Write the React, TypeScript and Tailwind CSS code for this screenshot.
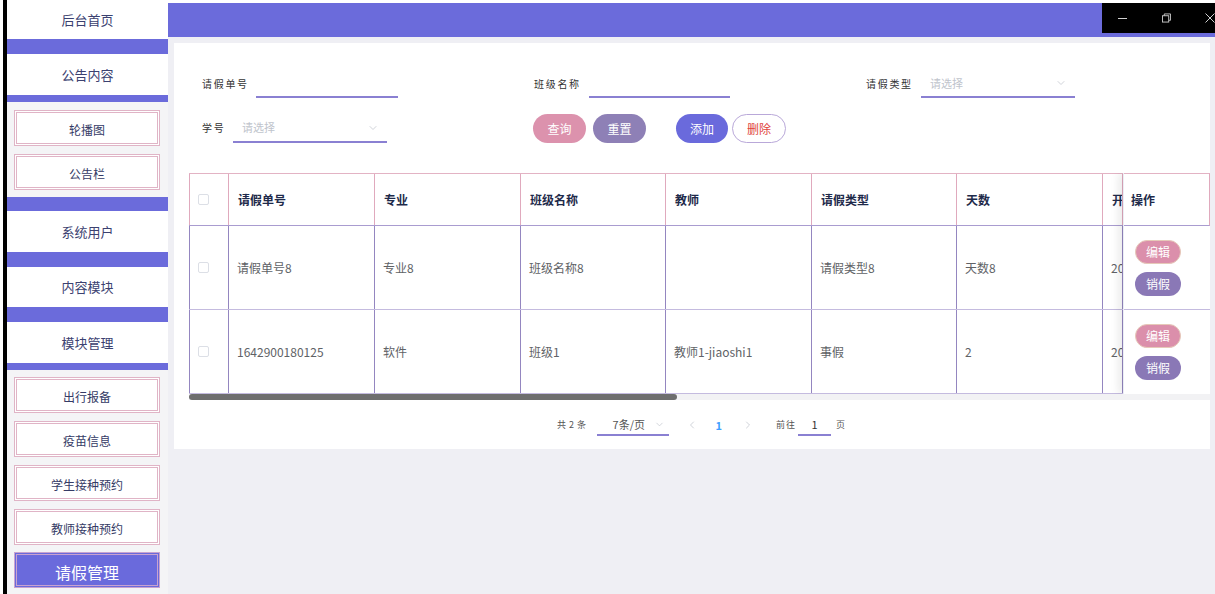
import { ChevronDown, ChevronLeft, ChevronRight } from 'lucide-react'

const FONT = "font-['Noto_Sans_CJK_SC','Noto_Sans',sans-serif]"

const COLS = [146, 146, 145, 146, 145, 146, 20]
const HEADERS = ['请假单号', '专业', '班级名称', '教师', '请假类型', '天数', '开始时间']
const ROWS = [
  ['请假单号8', '专业8', '班级名称8', '', '请假类型8', '天数8', '2022-01-23'],
  ['1642900180125', '软件', '班级1', '教师1-jiaoshi1', '事假', '2', '2022-01-23'],
]

function SubItem({ label, active }: { label: string; active?: boolean }) {
  return (
    <div
      className={`ml-[7px] w-[146px] h-[36px] border-[3px] border-double flex items-center justify-center pt-[3px] ${
        active
          ? 'bg-[#6a6adc] border-[#c9a3cf] text-white text-[16px]'
          : 'bg-white border-[#e0b4c6] text-[#353b66] text-[12px]'
      }`}
    >
      {label}
    </div>
  )
}

function Sidebar() {
  const head = 'bg-white flex items-center justify-center text-[13px] text-[#3b4170]'
  const bar = 'bg-[#6b6bdb]'
  return (
    <div className="w-[161px] shrink-0 bg-[#f4f4f6] flex flex-col">
      <div className={`${head} h-[39px]`}>后台首页</div>
      <div className={`${bar} h-[15px]`} />
      <div className={`${head} h-[41px]`}>公告内容</div>
      <div className={`${bar} h-[7px]`} />
      <div className="mt-[8px]"><SubItem label="轮播图" /></div>
      <div className="mt-[8px]"><SubItem label="公告栏" /></div>
      <div className={`${bar} h-[14px] mt-[7px]`} />
      <div className={`${head} h-[41px]`}>系统用户</div>
      <div className={`${bar} h-[15px]`} />
      <div className={`${head} h-[40px]`}>内容模块</div>
      <div className={`${bar} h-[15px]`} />
      <div className={`${head} h-[41px]`}>模块管理</div>
      <div className={`${bar} h-[7px]`} />
      <div className="mt-[7px]"><SubItem label="出行报备" /></div>
      <div className="mt-[8px]"><SubItem label="疫苗信息" /></div>
      <div className="mt-[8px]"><SubItem label="学生接种预约" /></div>
      <div className="mt-[8px]"><SubItem label="教师接种预约" /></div>
      <div className="mt-[7px]"><SubItem label="请假管理" active /></div>
    </div>
  )
}

function Label({ text, w }: { text: string; w: string }) {
  return <div className={`${w} shrink-0 pb-[2px] text-[10px] tracking-[1.7px] text-[#333]`}>{text}</div>
}

function Select({ w }: { w: string }) {
  return (
    <div className={`${w} h-full border-b-2 border-[#8a80d2] flex items-center justify-between pl-[9px] pr-[8px]`}>
      <span className="text-[11px] text-[#c0c4cc]">请选择</span>
      <ChevronDown size={12} strokeWidth={1.5} className="text-[#c0c4cc]" />
    </div>
  )
}

function Filters() {
  const btn = 'h-[29px] rounded-full flex items-center justify-center text-[12px]'
  return (
    <div className="pl-[28px] pt-[27px] text-[12px]">
      <div className="flex h-[28px] items-center">
        <div className="w-[332px] flex h-full items-center">
          <Label text="请假单号" w="w-[54px]" />
          <div className="w-[142px] h-full border-b-2 border-[#8a80d2]" />
        </div>
        <div className="w-[332px] flex h-full items-center">
          <Label text="班级名称" w="w-[55px]" />
          <div className="w-[141px] h-full border-b-2 border-[#8a80d2]" />
        </div>
        <div className="flex h-full items-center">
          <Label text="请假类型" w="w-[55px]" />
          <Select w="w-[154px]" />
        </div>
      </div>
      <div className="flex h-[29px] items-center mt-[16px]">
        <div className="w-[331px] flex h-full items-center">
          <Label text="学号" w="w-[31px]" />
          <Select w="w-[154px]" />
        </div>
        <div className={`${btn} w-[53px] bg-[#dc92ad] text-white`}>查询</div>
        <div className={`${btn} w-[53px] ml-[7px] bg-[#8e80b6] text-white`}>重置</div>
        <div className={`${btn} w-[52px] ml-[30px] bg-[#6a6adc] text-white`}>添加</div>
        <div className={`${btn} w-[54px] ml-[4px] bg-white border border-[#b9a8d9] text-[#e0443a]`}>删除</div>
      </div>
    </div>
  )
}

function Checkbox() {
  return <div className="w-[11px] h-[11px] border border-[#dcdfe6] rounded-[2px] bg-white" />
}

function ActionButtons() {
  return (
    <div className="flex flex-col gap-[8px] pl-[11px]">
      <div className="w-[46px] h-[24px] rounded-full bg-[#db8fab] border border-[#e6c9b8] text-white text-[12px] flex items-center justify-center">编辑</div>
      <div className="w-[46px] h-[24px] rounded-full bg-[#8a78b6] text-white text-[12px] flex items-center justify-center">销假</div>
    </div>
  )
}

function Table() {
  return (
    <div className="ml-[15px] w-[1021px]">
      <div className="relative w-[1021px] h-[221px] overflow-hidden">
        <div className="w-[1100px]">
          <div className="flex h-[53px] border-t border-[#e3b3c4] border-b border-b-[#a99cd0]">
            <div className="w-[40px] shrink-0 border-l border-r border-[#e0a9bd] flex items-center pl-[8px]">
              <Checkbox />
            </div>
            {HEADERS.map((h, i) => (
              <div
                key={h}
                style={{ width: COLS[i] }}
                className="shrink-0 overflow-hidden whitespace-nowrap border-r border-[#e0a9bd] flex items-center pl-[9px] text-[12px] font-bold text-[#1e2a4a]"
              >
                {i === HEADERS.length - 1 ? h.slice(0, 1) : h}
              </div>
            ))}
          </div>
          {ROWS.map((r, ri) => (
            <div key={ri} className="flex h-[84px] border-b border-[#c4bbdf]">
              <div className="w-[40px] shrink-0 border-l border-r border-[#9486c0] flex items-center pl-[8px]">
                <Checkbox />
              </div>
              {r.map((c, i) => (
                <div
                  key={i}
                  style={{ width: COLS[i] }}
                  className="shrink-0 overflow-hidden whitespace-nowrap border-r border-[#9486c0] flex items-center pl-[8px] text-[12px] text-[#606266]"
                >
                  {i === r.length - 1 ? c.slice(0, 2) : c}
                </div>
              ))}
            </div>
          ))}
        </div>
        <div className="absolute right-0 top-0 w-[87px] h-[221px] bg-white shadow-[-5px_0_8px_rgba(0,0,0,0.08)] border-l border-[#ebeef5]">
          <div className="h-[53px] border-t border-[#e3b3c4] border-b border-b-[#a99cd0] border-r border-r-[#e0a9bd] flex items-center pl-[7px] text-[12px] font-bold text-[#1e2a4a]">
            操作
          </div>
          <div className="h-[84px] border-b border-[#c4bbdf] flex items-center">
            <ActionButtons />
          </div>
          <div className="h-[84px] flex items-center">
            <ActionButtons />
          </div>
        </div>
      </div>
      <div className="h-[6px] w-[1021px] bg-[#f2f2f4]">
        <div className="h-full w-[488px] bg-[#6e6e6e] rounded-full" />
      </div>
    </div>
  )
}

function Pagination() {
  return (
    <div className="ml-[383px] mt-[13px] h-[24px] flex items-center text-[#555]">
      <span className="text-[9px] tracking-[0.5px]">共 2 条</span>
      <div className="ml-[10px] w-[72px] h-[22px] border-b-2 border-[#8a80d2] flex items-center justify-between pl-[16px] pr-[4px]">
        <span className="text-[11px] text-[#555]">7条/页</span>
        <ChevronDown size={11} strokeWidth={1.5} className="text-[#c0c4cc]" />
      </div>
      <ChevronLeft size={12} strokeWidth={1.5} className="ml-[17px] text-[#c0c4cc]" />
      <span className="ml-[18px] text-[11px] font-bold text-[#409eff]">1</span>
      <ChevronRight size={12} strokeWidth={1.5} className="ml-[20px] text-[#c0c4cc]" />
      <span className="ml-[22px] text-[9px] tracking-[1px]">前往</span>
      <div className="ml-[2px] w-[33px] h-[22px] border-b-2 border-[#8a80d2] flex items-center justify-center text-[11px] text-[#333]">1</div>
      <span className="ml-[5px] text-[9px]">页</span>
    </div>
  )
}

function WindowControls() {
  return (
    <div className="w-[113px] h-[30px] bg-black flex items-center pl-[16px] overflow-hidden">
      <div className="w-[10px] h-px bg-[#d0d0d0]" />
      <svg width="10" height="10" viewBox="0 0 10 10" className="ml-[35px]" fill="none" stroke="#d0d0d0" strokeWidth="1">
        <rect x="0.5" y="2.5" width="7" height="7" />
        <path d="M2.5 2.5V0.5H9.5V7.5H7.5" />
      </svg>
      <svg width="10" height="10" viewBox="0 0 10 10" className="ml-[34px] shrink-0" fill="none" stroke="#d0d0d0" strokeWidth="1">
        <path d="M0.5 0.5L9.5 9.5M9.5 0.5L0.5 9.5" />
      </svg>
    </div>
  )
}

export default function App() {
  return (
    <div className={`${FONT} w-[1215px] h-[594px] overflow-hidden flex bg-white`}>
      <div className="w-[3px] shrink-0 bg-white" />
      <div className="w-[4px] shrink-0 bg-black" />
      <Sidebar />
      <div className="flex-1 flex flex-col bg-[#efeff4]">
        <div className="h-[3px] bg-white" />
        <div className="h-[34px] bg-[#6b6bdb] flex justify-end items-start">
          <WindowControls />
        </div>
        <div className="ml-[6px] mt-[6px] w-[1036px] h-[406px] bg-white">
          <Filters />
          <div className="mt-[30px]">
            <Table />
          </div>
          <Pagination />
        </div>
      </div>
    </div>
  )
}
